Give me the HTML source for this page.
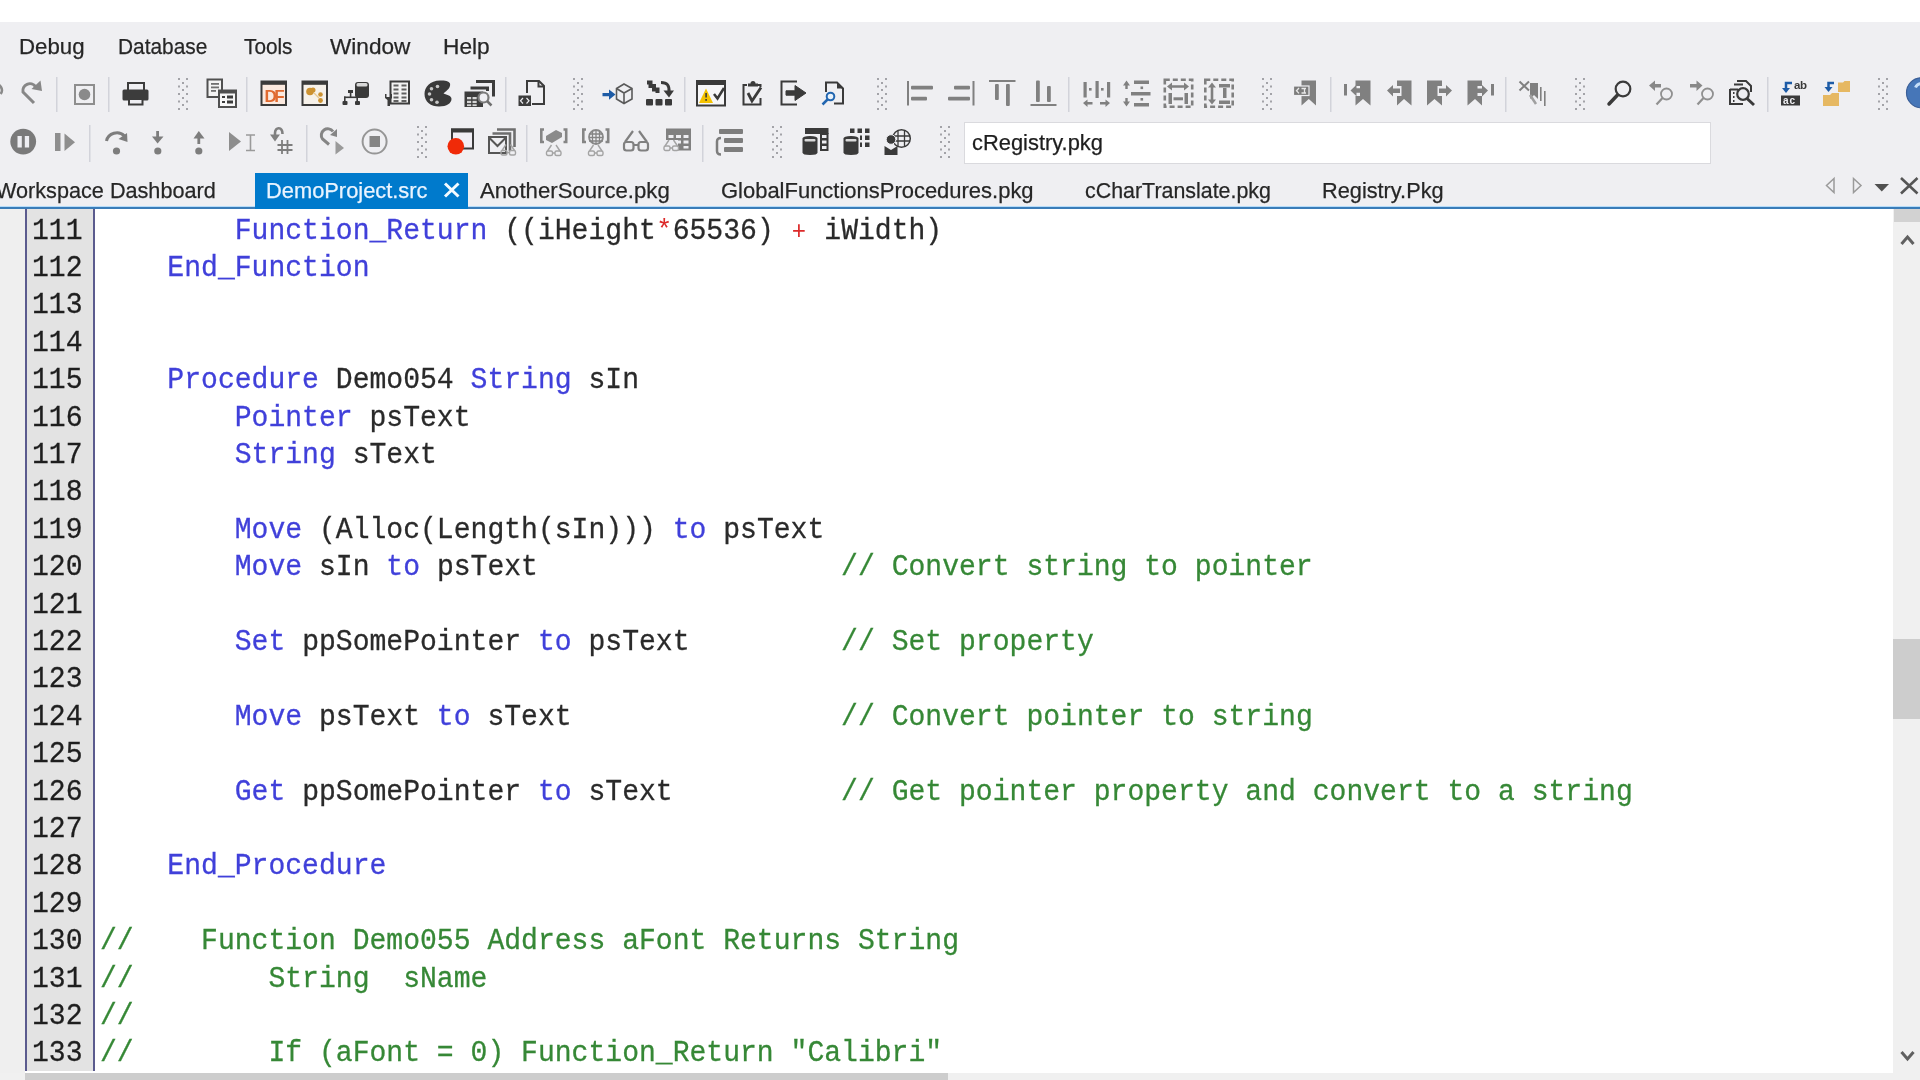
<!DOCTYPE html>
<html><head><meta charset="utf-8">
<style>
*{margin:0;padding:0;box-sizing:border-box}
html,body{width:1920px;height:1080px;overflow:hidden;background:#fff;position:relative}
body{font-family:"Liberation Sans",sans-serif}
.abs{position:absolute}
#wrap{position:absolute;left:0;top:0;width:1920px;height:1080px;overflow:hidden;background:#fff;filter:blur(0.45px)}
#chrome{position:absolute;left:0;top:22px;width:1920px;height:184px;background:#efeff2}
.lbl{position:absolute;white-space:pre;transform-origin:0 0;line-height:30px;-webkit-text-stroke:0.25px currentColor}
#blueline{position:absolute;left:0;top:207px;width:1920px;height:2px;background:#3a7cb8}
#lb{position:absolute;left:0;top:206px;width:1920px;height:1px;background:#b5dcfa}
#editor{position:absolute;left:0;top:209px;width:1920px;height:871px;background:#fff}
#leftm{position:absolute;left:0;top:209px;width:25px;height:864px;background:#efefef}
#gut{position:absolute;left:25px;top:209px;width:69.5px;height:862px;background:#e3e3e3;border-left:2.5px solid #5b5b8e;border-right:2.5px solid #5b5b8e}
.code{position:absolute;left:99.5px;top:212.5px;font-family:"Liberation Mono",monospace;font-size:30px;line-height:37.4px;white-space:pre;color:#2a2a2a;-webkit-text-stroke:0.3px currentColor;transform:scaleX(0.93556);transform-origin:0 0}
.nums{position:absolute;left:32px;top:212.5px;font-family:"Liberation Mono",monospace;font-size:30px;line-height:37.4px;white-space:pre;color:#1e1e1e;-webkit-text-stroke:0.3px currentColor;transform:scaleX(0.93556);transform-origin:0 0}
.k{color:#4040da}
.c{color:#368836}
.o{color:#dc2a2a;-webkit-text-stroke:0;display:inline-block;transform:scale(0.85);transform-origin:50% 65%}
#vs{position:absolute;left:1893px;top:209px;width:27px;height:871px;background:#f0f0f0}
#hs{position:absolute;left:0;top:1073px;width:1893px;height:7px;background:#f0f0f0}
</style></head><body><div id="wrap">
<div id="chrome">
</div>
<svg class="abs" style="left:0;top:0" width="1920" height="206" viewBox="0 0 1920 206">
<defs>
<g id="grip" fill="#a3a3a8">
<rect x="0" y="0" width="2" height="2"/><rect x="8" y="0" width="2" height="2"/>
<rect x="4" y="4" width="2" height="2"/>
<rect x="0" y="7.5" width="2" height="2"/><rect x="8" y="7.5" width="2" height="2"/>
<rect x="4" y="11" width="2" height="2"/>
<rect x="0" y="15" width="2" height="2"/><rect x="8" y="15" width="2" height="2"/>
<rect x="4" y="19" width="2" height="2"/>
<rect x="0" y="22.5" width="2" height="2"/><rect x="8" y="22.5" width="2" height="2"/>
<rect x="4" y="26" width="2" height="2"/>
<rect x="0" y="30" width="2" height="2"/><rect x="8" y="30" width="2" height="2"/>
</g>
<g id="glasses" fill="none" stroke="#a4a4a4" stroke-width="1.4">
<rect x="0" y="6" width="6" height="4.5" rx="1.5"/><rect x="8.5" y="6" width="6" height="4.5" rx="1.5"/>
<path d="M6 8 H8.5 M1 6 L5 0 M13.5 6 L9.5 0"/>
</g>
</defs>
<!-- separators row1 -->
<g fill="#d2d3da">
<rect x="56" y="77" width="1.5" height="35"/>
<rect x="108" y="77" width="1.5" height="35"/>
<rect x="246" y="77" width="1.5" height="35"/>
<rect x="505" y="77" width="1.5" height="35"/>
<rect x="684" y="77" width="1.5" height="35"/>
<rect x="1068" y="77" width="1.5" height="35"/>
<rect x="1330" y="77" width="1.5" height="35"/>
<rect x="1505" y="77" width="1.5" height="35"/>
<rect x="1767" y="77" width="1.5" height="35"/>
<!-- row2 -->
<rect x="89" y="125" width="1.5" height="37"/>
<rect x="306" y="125" width="1.5" height="37"/>
<rect x="526" y="125" width="1.5" height="37"/>
<rect x="702" y="125" width="1.5" height="37"/>
</g>
<use href="#grip" x="178" y="78"/>
<use href="#grip" x="573" y="78"/>
<use href="#grip" x="877" y="78"/>
<use href="#grip" x="1262" y="78"/>
<use href="#grip" x="1575" y="78"/>
<use href="#grip" x="1878" y="78"/>
<use href="#grip" x="417" y="126"/>
<use href="#grip" x="772" y="126"/>
<use href="#grip" x="940" y="126"/>

<!-- ROW 1 -->
<!-- partial undo at left edge -->
<path d="M-6 84.5 A6 6 0 0 1 0.5 94" fill="none" stroke="#8a8a8a" stroke-width="2.5"/>
<!-- redo -->
<path d="M34 103 L23 92 A7 7 0 0 1 35.5 86.5" fill="none" stroke="#878787" stroke-width="3"/>
<path d="M40.5 80.5 L42 91 L31.5 89 Z" fill="#878787"/>
<!-- record box -->
<rect x="75" y="85" width="19" height="19" fill="none" stroke="#8e8e8e" stroke-width="2"/>
<circle cx="84.5" cy="94.5" r="5.8" fill="#8a8a8a"/>
<!-- printer -->
<rect x="128" y="83" width="16" height="9" fill="none" stroke="#3c3c3c" stroke-width="2"/>
<rect x="122.5" y="89.5" width="26" height="11" rx="1.5" fill="#3c3c3c"/>
<rect x="129" y="99" width="13.5" height="5.5" fill="#eeeef2" stroke="#3c3c3c" stroke-width="2"/>
<!-- copy/list icon -->
<rect x="207.5" y="79.5" width="14.5" height="17.5" fill="#f4f4f4" stroke="#505050" stroke-width="2"/>
<g fill="#707070"><rect x="211" y="83" width="8" height="1.8"/><rect x="211" y="86.5" width="8" height="1.8"/><rect x="211" y="90" width="5" height="1.8"/></g>
<rect x="219" y="90.5" width="17" height="16.5" fill="#f8f8f8" stroke="#505050" stroke-width="2"/>
<rect x="219" y="90" width="17" height="3.5" fill="#505050"/>
<g fill="#3c3c3c"><rect x="222" y="96" width="3" height="2"/><rect x="227" y="95.5" width="6" height="3"/><rect x="222" y="101" width="3" height="2"/><rect x="227" y="100.5" width="6" height="3"/></g>
<!-- DF icon -->
<rect x="261.5" y="81.5" width="24.5" height="23.5" fill="#fbe9df" stroke="#3a3a3a" stroke-width="2"/>
<rect x="261" y="81" width="25.5" height="3.8" fill="#3a3a3a"/>
<text x="264.5" y="101.5" font-family="Liberation Sans" font-weight="bold" font-size="17" fill="#e06a30" letter-spacing="-2.5">DF</text>
<!-- window with yellow -->
<rect x="302.5" y="81.5" width="24.5" height="23.5" fill="#f6f1ea" stroke="#3a3a3a" stroke-width="2"/>
<rect x="302" y="81" width="25.5" height="3.8" fill="#3a3a3a"/>
<g fill="#cc9232"><circle cx="310" cy="91.5" r="3.8"/><circle cx="313" cy="90" r="2.5"/><circle cx="320.5" cy="94.5" r="2.3"/><circle cx="320.5" cy="100.5" r="2.4"/></g><path d="M314 93 L319 98" stroke="#e8c890" stroke-width="1.2"/>
<!-- hierarchy db -->
<rect x="355" y="82" width="14" height="16" rx="3" fill="#3a3a3a"/>
<rect x="356.5" y="83" width="11" height="3.5" rx="1.5" fill="#d8d8d8"/>
<g fill="#3a3a3a"><rect x="348" y="90" width="5" height="3"/><rect x="349.8" y="92" width="1.6" height="5"/><rect x="344" y="96.5" width="14" height="1.6"/><rect x="344" y="96.5" width="1.6" height="5"/><rect x="356.4" y="96.5" width="1.6" height="5"/><rect x="342.5" y="101" width="5" height="4" rx="1"/><rect x="355" y="101" width="5" height="4" rx="1"/></g>
<!-- table with tool -->
<rect x="390.5" y="81.5" width="18.5" height="22" fill="#f2f2f2" stroke="#3c3c3c" stroke-width="2"/>
<g fill="#606060"><rect x="393.5" y="84.5" width="5" height="2"/><rect x="401.5" y="84.5" width="5" height="2"/><rect x="393.5" y="88.5" width="5" height="2"/><rect x="401.5" y="88.5" width="5" height="2"/><rect x="393.5" y="92.5" width="5" height="2"/><rect x="401.5" y="92.5" width="5" height="2"/><rect x="393.5" y="96.5" width="5" height="2"/><rect x="401.5" y="96.5" width="5" height="2"/><rect x="393.5" y="100" width="5" height="2"/><rect x="401.5" y="100" width="5" height="2"/></g>
<path d="M385 94 L385 98 L387.5 100 L387.5 106 L390 106 L390 100 L392 98 L392 94 L390.5 94 L390.5 97 L386.5 97 L386.5 94 Z" fill="#3c3c3c"/>
<!-- palette -->
<path d="M440 80.5 C430 80.5 424.5 87 424.5 94 C424.5 102 431 106.5 439 106.5 C447 106.5 451.5 103 451.5 99 C451.5 95.5 447 95 443.5 93.5 C447 90.5 451 87.5 450 83.5 C449 81 445 80.5 440 80.5 Z" fill="#3a3a3a"/>
<g fill="#c8c8c8"><circle cx="437.5" cy="86.5" r="1.8"/><circle cx="431.5" cy="88.8" r="1.8"/><circle cx="429.5" cy="94" r="1.8"/><circle cx="431.5" cy="99.8" r="1.8"/><circle cx="437" cy="102.3" r="1.8"/></g>
<!-- tables search -->
<path d="M476 81.5 H493.5 V96.5" fill="none" stroke="#3c3c3c" stroke-width="3"/>
<path d="M470.5 88 H487.5 V91" fill="none" stroke="#3c3c3c" stroke-width="3"/>
<rect x="464.5" y="91.5" width="18.5" height="15.5" fill="#3c3c3c"/>
<g fill="#d6d6d6"><rect x="467" y="97" width="4.2" height="2.3"/><rect x="472.5" y="97" width="4.2" height="2.3"/><rect x="467" y="100.8" width="4.2" height="2.3"/><rect x="472.5" y="100.8" width="4.2" height="2.3"/><rect x="467" y="104.3" width="4.2" height="1.8"/><rect x="472.5" y="104.3" width="4.2" height="1.8"/></g>
<circle cx="483.5" cy="97.5" r="5" fill="#eeeef2" stroke="#7a7a7a" stroke-width="2.2"/>
<path d="M487 101 L491.5 105.5" stroke="#707070" stroke-width="2.5"/>
<!-- doc with box -->
<path d="M527 93 V81 H539 L544 86 V104 H532" fill="none" stroke="#3c3c3c" stroke-width="2"/>
<path d="M538.5 81 V86.5 H544" fill="none" stroke="#3c3c3c" stroke-width="2"/>
<rect x="518.5" y="95.5" width="12.5" height="10.5" fill="#3c3c3c"/>
<path d="M523 98 L520.5 100.8 L523 103.5 M526.5 98 L529 100.8 L526.5 103.5" fill="none" stroke="#eeeef2" stroke-width="1.2"/>
<!-- blue arrow cube -->
<path d="M602.5 93 H609 V89.5 L615.5 94.6 L609 99.7 V96.3 H602.5 Z" fill="#1d5ba6"/>
<path d="M624 84 L632 88.5 V99 L624 103.5 L616.5 99 V88.5 Z M616.5 88.5 L624 93 L632 88.5 M624 93 V103.5" fill="none" stroke="#5a5a5a" stroke-width="1.6"/>
<!-- stairs arrows + blocks -->
<path d="M647 82.5 L650.5 82.5 L650.5 86 L654 86 L654 89.5 L657.5 89.5 L657.5 93" fill="none" stroke="#3a3a3a" stroke-width="4"/>
<path d="M661 82.5 C667 82.5 669.5 85 669 92" fill="none" stroke="#3a3a3a" stroke-width="3"/>
<path d="M663.5 90.5 L669 97.5 L674 90.5 Z" fill="#3a3a3a"/>
<g fill="#3a3a3a"><rect x="646" y="99" width="7" height="6.5" rx="1"/><rect x="655.5" y="99" width="7" height="6.5" rx="1"/><rect x="665" y="99" width="7" height="6.5" rx="1"/></g>
<!-- window warning check -->
<rect x="697" y="81" width="28" height="24.5" fill="#f6f6f8" stroke="#3a3a3a" stroke-width="2"/>
<rect x="696" y="80.5" width="30" height="4.5" fill="#3a3a3a"/>
<path d="M706 88.5 L713 103 H699 Z" fill="#f4c200"/>
<g fill="#3a3a3a"><rect x="705.3" y="93" width="1.6" height="4.5"/><rect x="705.3" y="99" width="1.6" height="1.8"/></g>
<path d="M714 94 L717.5 98.5 L724 88" fill="none" stroke="#3a3a3a" stroke-width="2.5"/>
<!-- clipboard check -->
<path d="M747 85 H743.5 V104.5 H760.5 V98" fill="none" stroke="#3a3a3a" stroke-width="2"/>
<path d="M757 85 H760.5 V87" fill="none" stroke="#3a3a3a" stroke-width="2"/>
<path d="M748 86.5 V83.5 H750.5 A2.5 2.5 0 0 1 755.5 83.5 H758 V86.5 Z" fill="#3a3a3a"/>
<path d="M748 93 L752 101 L761 87.5" fill="none" stroke="#3a3a3a" stroke-width="2.8"/>
<!-- export arrow -->
<path d="M797 81.5 H781.5 V104.5 H797" fill="none" stroke="#3a3a3a" stroke-width="2"/>
<path d="M786 90.8 H795 V85.5 L806 93 L795 100.5 V95.2 H786 Z" fill="#3a3a3a" stroke="#3a3a3a" stroke-width="1" stroke-linejoin="round"/>
<!-- doc search -->
<path d="M826 92 V82.5 H837 L843 88.5 V103.5 H834" fill="none" stroke="#3a3a3a" stroke-width="2"/>
<path d="M837 82.5 V88.5 H843 Z" fill="#3a3a3a"/>
<circle cx="830.5" cy="96.5" r="3.8" fill="#e8f2fb" stroke="#2266b0" stroke-width="2"/>
<path d="M827.5 99.5 L822.5 104.5" stroke="#2266b0" stroke-width="2.5"/>
<!-- align left -->
<g fill="#808080">
<rect x="907" y="81" width="2" height="24.5"/><rect x="911" y="85.7" width="22" height="3.8" rx="1"/><rect x="911" y="96.8" width="16" height="3.8" rx="1"/>
<rect x="972.5" y="81" width="2" height="24.5"/><rect x="954" y="85.7" width="16" height="3.8" rx="1"/><rect x="948" y="96.8" width="22" height="3.8" rx="1"/>
<rect x="989" y="80" width="26.5" height="2"/><rect x="995" y="84" width="3.8" height="16" rx="1"/><rect x="1006" y="84" width="3.8" height="22" rx="1"/>
<rect x="1030.5" y="104" width="26" height="2"/><rect x="1036" y="80.5" width="3.8" height="21.5" rx="1"/><rect x="1047" y="86" width="3.8" height="16" rx="1"/>
<!-- space horiz -->
<rect x="1083.5" y="82" width="3.2" height="15.5"/><rect x="1095.5" y="81" width="3.2" height="17"/><rect x="1107" y="82" width="3.2" height="15.5"/>
<rect x="1089" y="88" width="2.6" height="2.6"/><rect x="1101" y="88" width="2.6" height="2.6"/>
<path d="M1083 103 L1087.5 99.5 V102 H1092.5 V104.5 H1087.5 V107 Z"/><path d="M1110 103 L1105.5 99.5 V102 H1100 V104.5 H1105.5 V107 Z"/>
<!-- space vert -->
<rect x="1134" y="80.5" width="15" height="3.5"/><rect x="1131" y="92" width="19.5" height="3.5"/><rect x="1134" y="103" width="15" height="3.5"/>
<rect x="1140.5" y="86.5" width="2.6" height="2.6"/><rect x="1140.5" y="98" width="2.6" height="2.6"/>
<path d="M1126.5 80.5 L1123 85.5 H1125.3 V89 H1127.7 V85.5 H1130 Z"/><path d="M1126.5 106.5 L1123 101.5 H1125.3 V98 H1127.7 V101.5 H1130 Z"/>
</g>
<!-- size width -->
<rect x="1164.8" y="79.8" width="27.4" height="27" fill="none" stroke="#808080" stroke-width="2.6" stroke-dasharray="5 3"/>
<g fill="#808080">
<path d="M1167 86.5 L1172 82.5 V85.2 H1184 V82.5 L1189 86.5 L1184 90.5 V87.8 H1172 V90.5 Z"/>
<rect x="1168.5" y="93" width="3.5" height="11"/><rect x="1184.5" y="93" width="3.5" height="11"/><rect x="1173.5" y="97.3" width="9.5" height="3"/>
</g>
<!-- size height -->
<rect x="1205.3" y="79.8" width="27.4" height="27" fill="none" stroke="#808080" stroke-width="2.6" stroke-dasharray="5 3"/>
<g fill="#808080">
<path d="M1212 82.5 L1216 87.5 H1213.3 V99.5 H1216 L1212 104.5 L1208 99.5 H1210.7 V87.5 H1208 Z"/>
<rect x="1219" y="84" width="11" height="3.5"/><rect x="1219" y="100.5" width="11" height="3.5"/><rect x="1223" y="88" width="3.5" height="10"/>
</g>
<!-- bookmarks -->
<g fill="#808080">
<path d="M1301.5 80.5 H1316 V105.5 L1308.8 99 L1301.5 105.5 Z"/>
<rect x="1293.5" y="86" width="15.5" height="9.5" fill="#7c7c7c" stroke="#eeeef2" stroke-width="1.2"/>
<path d="M1299 88 L1296.5 90.7 L1299 93.4 M1301.5 88.5 H1306 M1301.5 93 H1306 M1304.5 88.5 V93" fill="none" stroke="#e8e8e8" stroke-width="1.3"/>
<path d="M1344 84 H1347 V95.5 H1344 Z M1350.5 90.5 L1356.5 84.8 V88.3 H1361 V92.7 H1356.5 V96.2 Z"/>
<path d="M1355.5 80.5 H1370.5 V105.5 L1363 99 L1355.5 105.5 V96 H1360 V86 H1355.5 Z"/>
<path d="M1397 80.5 H1411.5 V105.5 L1404 99 L1397 105.5 V96 H1401.5 V86 H1397 Z"/>
<path d="M1387 90.5 L1393 85 V88.5 H1400 V93 H1393 V96.5 Z"/>
<path d="M1427 80.5 H1442 V86 H1437.5 V96 H1442 V105.5 L1434.5 99 L1427 105.5 Z"/>
<path d="M1452 90.5 L1446 85 V88.5 H1439 V93 H1446 V96.5 Z"/>
<path d="M1467.5 80.5 H1482 V86 H1477.5 V96 H1482 V105.5 L1475 99 L1467.5 105.5 Z"/>
<path d="M1488 90.5 L1482 85 V88.5 H1475 V93 H1482 V96.5 Z"/>
<rect x="1491" y="84" width="3" height="11.5"/>
<!-- clear bookmarks -->
<path d="M1519.5 81.5 L1529 90.5 M1529 81.5 L1519.5 90.5" stroke="#808080" stroke-width="2"/>
<path d="M1530 83 H1538 V99 L1534 95 L1530 99 Z" fill="#808080"/>
<path d="M1530 95 L1536 104" stroke="#a0a0a0" stroke-width="2.5"/>
<rect x="1540" y="87" width="1.6" height="14"/><rect x="1544" y="91" width="1.6" height="15"/>
</g>
<!-- search -->
<circle cx="1623" cy="89" r="7.3" fill="none" stroke="#3a3a3a" stroke-width="2.2"/>
<path d="M1617.5 95 L1609 104" stroke="#3a3a3a" stroke-width="3.5" stroke-linecap="round"/>
<!-- find prev -->
<path d="M1649 85.5 L1655 80.5 V84 H1661 V87.5 H1655 V91 Z" fill="#888"/>
<circle cx="1666.5" cy="94" r="5.5" fill="none" stroke="#909090" stroke-width="1.8"/>
<path d="M1662.5 98 L1656.5 104.5" stroke="#909090" stroke-width="2.2"/>
<!-- find next -->
<path d="M1702.5 85.5 L1696.5 80.5 V84 H1690 V87.5 H1696.5 V91 Z" fill="#888"/>
<circle cx="1707.5" cy="94" r="5.5" fill="none" stroke="#909090" stroke-width="1.8"/>
<path d="M1703.5 98 L1697.5 104.5" stroke="#909090" stroke-width="2.2"/>
<!-- find in files -->
<path d="M1737 81 H1746 L1751 86 V92 M1734 84.5 H1743" fill="none" stroke="#3a3a3a" stroke-width="2"/>
<path d="M1730 89.5 H1738 M1730 89 V104 H1743" fill="none" stroke="#3a3a3a" stroke-width="2"/>
<g fill="#3a3a3a"><rect x="1733" y="92" width="1.5" height="2"/><rect x="1733" y="96" width="1.5" height="2"/><rect x="1733" y="100" width="1.5" height="2"/></g>
<circle cx="1743" cy="94" r="5.8" fill="#eeeef2" stroke="#3a3a3a" stroke-width="2.2"/>
<path d="M1747 98.5 L1754 105" stroke="#3a3a3a" stroke-width="3"/>
<!-- replace -->
<path d="M1792 83 H1786 V90" fill="none" stroke="#1d5ba6" stroke-width="2.5"/>
<path d="M1782 88 L1786 93 L1790 88 Z" fill="#1d5ba6"/>
<text x="1794" y="89" font-family="Liberation Sans" font-weight="bold" font-size="11.5" fill="#3a3a3a" letter-spacing="-0.5">ab</text>
<rect x="1781" y="95.5" width="19" height="10" fill="#3a3a3a"/>
<text x="1783" y="104" font-family="Liberation Sans" font-weight="bold" font-size="10" fill="#eeeef2" letter-spacing="1">ac</text>
<!-- folder replace -->
<path d="M1834 83 H1828.5 V89" fill="none" stroke="#1d5ba6" stroke-width="2.5"/>
<path d="M1824.5 87 L1828.5 92 L1832.5 87 Z" fill="#1d5ba6"/>
<path d="M1838 82.5 H1843 L1844.5 81 H1850 V92 H1838 Z" fill="#e6b862"/>
<path d="M1823 95 H1830 L1832 93 H1839 V106 H1823 Z" fill="#e6b862"/>
<!-- help -->
<circle cx="1921.5" cy="92.8" r="15" fill="#4676b8" stroke="#3b5f98" stroke-width="1.2"/>
<path d="M1915.5 87.5 A6.5 6.5 0 0 1 1926 85.5" fill="none" stroke="#c6def8" stroke-width="3"/>

<!-- ROW 2 -->
<circle cx="23.2" cy="141.6" r="12.9" fill="#7a7a7a"/>
<rect x="17.5" y="136" width="4.3" height="11.5" fill="#eeeef2"/><rect x="24.8" y="136" width="4.3" height="11.5" fill="#eeeef2"/>
<rect x="55" y="133" width="5.5" height="18" fill="#8e8e8e"/>
<path d="M64.5 133.5 L75 142.2 L64.5 151 Z" fill="#8e8e8e"/>
<!-- step over -->
<path d="M106.5 141 A10.5 10 0 0 1 124.5 136" fill="none" stroke="#7d7d7d" stroke-width="3"/>
<path d="M118.5 139 L127.5 142 L127 133 Z" fill="#7d7d7d"/>
<circle cx="116.5" cy="151" r="3.6" fill="#7d7d7d"/>
<!-- step into -->
<rect x="156.2" y="131" width="2.8" height="9" fill="#7d7d7d"/>
<path d="M152 136.5 L157.6 143.5 L163.5 136.5 Z" fill="#7d7d7d"/>
<circle cx="157.8" cy="151" r="3.6" fill="#7d7d7d"/>
<!-- step out -->
<rect x="197.4" y="135" width="2.8" height="9" fill="#7d7d7d"/>
<path d="M193.5 138.5 L198.8 131 L204.5 138.5 Z" fill="#7d7d7d"/>
<circle cx="198.8" cy="151" r="3.6" fill="#7d7d7d"/>
<!-- run to cursor -->
<path d="M229 132 L241 141.5 L229 151 Z" fill="#8e8e8e"/>
<path d="M246 135 H255 M250.5 135 V150.5 M246 150.5 H255" fill="none" stroke="#9a9a9a" stroke-width="1.6"/>
<!-- set next # -->
<path d="M282.5 134 C282.5 126.5 275 126.5 275 133 V136" fill="none" stroke="#808080" stroke-width="2.6"/>
<path d="M270 134.5 L280 134.5 L275 141.5 Z" fill="#808080"/>
<path d="M282 140 V154 M287.5 140 V154 M277.5 145 H292.5 M277.5 150 H292.5" fill="none" stroke="#7d7d7d" stroke-width="1.8"/>
<!-- step back -->
<path d="M329 144.5 L322.5 139 A6 6 0 0 1 333 131.5" fill="none" stroke="#858585" stroke-width="3"/>
<path d="M330 135 L337 137 L337 129 Z" fill="#858585"/>
<path d="M335.5 141 L344 148 L335.5 154.5 Z" fill="#9a9a9a"/>
<!-- stop -->
<circle cx="374.6" cy="141.6" r="12" fill="none" stroke="#969696" stroke-width="2"/>
<rect x="369.5" y="136" width="10.5" height="11" fill="#858585"/>
<!-- breakpoint window -->
<rect x="452" y="129.5" width="21" height="19" fill="#f0eef4" stroke="#3a3a3a" stroke-width="2"/>
<rect x="451" y="128.5" width="23" height="4" fill="#3a3a3a"/>
<circle cx="455.8" cy="146.3" r="8.3" fill="#f02a08"/>
<!-- mail stack -->
<path d="M497 129.5 H514.5 V147 M492.5 133.5 H510 V151" fill="none" stroke="#6e6e6e" stroke-width="2.6"/>
<rect x="489" y="137" width="17" height="16" fill="#eeeef2" stroke="#555" stroke-width="2"/>
<path d="M489 137.5 L497.5 146 L506 137.5" fill="none" stroke="#555" stroke-width="2"/>
<use href="#glasses" x="501" y="144.5"/>
<!-- bracket object -->
<path d="M544 129.5 H541.3 V142 H544 M563.5 129.5 H566.2 V142 H563.5" fill="none" stroke="#858585" stroke-width="2.6"/>
<path d="M546 136 L556 130 L562 133 L562 137 L552 143 L546 140 Z" fill="#8a8a8a"/>
<use href="#glasses" x="546.5" y="145"/>
<!-- bracket globe -->
<path d="M586 129.5 H583.3 V142 H586 M605.5 129.5 H608.2 V142 H605.5" fill="none" stroke="#858585" stroke-width="2.6"/>
<circle cx="596" cy="137" r="7" fill="none" stroke="#8a8a8a" stroke-width="1.8"/>
<path d="M589 134 H603 M589 137.5 H603 M589 141 H603 M592.5 130.5 V143.5 M596 130 V144 M599.5 130.5 V143.5" stroke="#858585" stroke-width="1.3"/>
<use href="#glasses" x="588.5" y="145"/>
<!-- glasses big -->
<g fill="none" stroke="#808080" stroke-width="2.2">
<rect x="624" y="142" width="9.5" height="8.5" rx="2.5"/><rect x="638.5" y="142" width="9.5" height="8.5" rx="2.5"/>
<path d="M633.5 145 H638.5 M625 142 L633 131 M647 142 L639 131"/>
</g>
<!-- table glasses -->
<rect x="666" y="128.5" width="25" height="22" fill="#808080"/>
<g fill="#eeeef2"><rect x="668.5" y="135" width="5" height="3"/><rect x="676" y="135" width="5" height="3"/><rect x="683.5" y="135" width="5" height="3"/><rect x="676" y="140.5" width="5" height="3"/><rect x="683.5" y="140.5" width="5" height="3"/><rect x="683.5" y="146" width="5" height="2.5"/><rect x="664" y="140" width="14" height="16"/></g>
<use href="#glasses" x="664" y="140"/>
<!-- list -->
<g fill="#7d7d7d"><rect x="719" y="129" width="24" height="5" rx="1"/><rect x="724" y="138" width="19" height="5" rx="1"/><rect x="724" y="147" width="19" height="5" rx="1"/></g>
<path d="M721 138 Q717 138 717 141.5 V151 Q717 154.5 721 154.5" fill="none" stroke="#7d7d7d" stroke-width="2.5"/>
<!-- db table -->
<rect x="805" y="128" width="23.5" height="6" fill="#3a3a3a"/>
<rect x="820" y="133" width="8.5" height="18" fill="#3a3a3a"/>
<g fill="#eeeef2"><rect x="822" y="135" width="4.5" height="3"/><rect x="822" y="140.5" width="4.5" height="3"/><rect x="822" y="146" width="4.5" height="3"/></g>
<path d="M802.5 138.5 Q802.5 136 810 136 Q817.5 136 817.5 138.5 V152.5 Q817.5 155 810 155 Q802.5 155 802.5 152.5 Z" fill="#3a3a3a"/>
<rect x="804.5" y="139" width="11" height="2.5" rx="1" fill="#d9d9d9"/>
<!-- db grid -->
<g fill="#3a3a3a"><rect x="850" y="128.5" width="4.5" height="4.5"/><rect x="857.5" y="128.5" width="4.5" height="4.5"/><rect x="865" y="128.5" width="4.5" height="4.5"/><rect x="860" y="135.5" width="2" height="4.5"/><rect x="865" y="135.5" width="4.5" height="4.5"/><rect x="860" y="142.5" width="2" height="4.5"/><rect x="865" y="142.5" width="4.5" height="4.5"/></g>
<path d="M843.5 138.5 Q843.5 136 851 136 Q858.5 136 858.5 138.5 V152.5 Q858.5 155 851 155 Q843.5 155 843.5 152.5 Z" fill="#3a3a3a"/>
<rect x="845.5" y="139" width="11" height="2.5" rx="1" fill="#d9d9d9"/>
<!-- person globe -->
<circle cx="901.5" cy="138.5" r="8.8" fill="none" stroke="#3a3a3a" stroke-width="1.5"/>
<path d="M893 136 H910 M893 141 H910 M898 130 V147 M904.5 130 V147" stroke="#3a3a3a" stroke-width="1.3"/>
<circle cx="891" cy="139.5" r="4.8" fill="#3a3a3a" stroke="#eeeef2" stroke-width="1"/>
<path d="M884.5 146 L891 150 L897.5 146 V155 H884.5 Z" fill="#3a3a3a"/>
</svg>


<div id="lb"></div>
<div id="blueline"></div>
<div class="abs" style="left:255px;top:173px;width:213px;height:36px;background:#007acc"></div>
<div id="editor"></div>
<div id="leftm"></div>
<div id="gut"></div>
<div class="nums">111
112
113
114
115
116
117
118
119
120
121
122
123
124
125
126
127
128
129
130
131
132
133</div>
<div class="code"><span>        </span><span class="k">Function_Return</span> ((iHeight<span class="o" style="transform:scale(0.95);transform-origin:50% 20%">*</span>65536) <span class="o">+</span> iWidth)
    <span class="k">End_Function</span>


    <span class="k">Procedure</span> Demo054 <span class="k">String</span> sIn
        <span class="k">Pointer</span> psText
        <span class="k">String</span> sText

        <span class="k">Move</span> (Alloc(Length(sIn))) <span class="k">to</span> psText
        <span class="k">Move</span> sIn <span class="k">to</span> psText                  <span class="c">// Convert string to pointer</span>

        <span class="k">Set</span> ppSomePointer <span class="k">to</span> psText         <span class="c">// Set property</span>

        <span class="k">Move</span> psText <span class="k">to</span> sText                <span class="c">// Convert pointer to string</span>

        <span class="k">Get</span> ppSomePointer <span class="k">to</span> sText          <span class="c">// Get pointer property and convert to a string</span>

    <span class="k">End_Procedure</span>

<span class="c">//    Function Demo055 Address aFont Returns String</span>
<span class="c">//        String  sName</span>
<span class="c">//</span>
<span class="c">//        If (aFont = 0) Function_Return "Calibri"</span></div>
<div id="vs"></div>
<div id="hs"></div>
<div class="abs" style="left:25px;top:1073px;width:923px;height:7px;background:#cdcdcd"></div>
<div class="abs" style="left:1893px;top:639px;width:27px;height:80px;background:#cdcdcd"></div>
<div class="abs" style="left:1894px;top:209px;width:26px;height:13px;background:#d2d2d2"></div>
<div class="abs" style="left:963.5px;top:121.5px;width:747px;height:42px;background:#fff;border:1px solid #dadade"></div>
<svg class="abs" style="left:0;top:0" width="1920" height="1080" viewBox="0 0 1920 1080">
<path d="M445 183.5 L458.5 196.5 M458.5 183.5 L445 196.5" stroke="#f4fbff" stroke-width="3"/>
<path d="M1834 178.5 L1826.5 185.5 L1834 192.5 Z" fill="none" stroke="#9a9a9a" stroke-width="1.5"/>
<path d="M1853.5 178.5 L1861 185.5 L1853.5 192.5 Z" fill="none" stroke="#9a9a9a" stroke-width="1.5"/>
<path d="M1874.5 184 H1889 L1881.8 191.5 Z" fill="#505050"/>
<path d="M1901 178 L1917.5 193.5 M1917.5 178 L1901 193.5" stroke="#555" stroke-width="2.6"/>
<path d="M1901.5 244 L1907.5 237 L1913.5 244" fill="none" stroke="#606060" stroke-width="3"/>
<path d="M1901.5 1052 L1907.5 1059 L1913.5 1052" fill="none" stroke="#606060" stroke-width="3"/>
</svg>
<!--LABELS-->
<div class="lbl" id="l_Debug" style="left:19.38px;top:31.90px;font-size:22.5px;color:#262626;transform:scaleX(0.9889)">Debug</div>
<div class="lbl" id="l_Database" style="left:118.38px;top:31.90px;font-size:22.5px;color:#262626;transform:scaleX(0.9278)">Database</div>
<div class="lbl" id="l_Tools" style="left:243.50px;top:31.90px;font-size:22.5px;color:#262626;transform:scaleX(0.9232)">Tools</div>
<div class="lbl" id="l_Window" style="left:329.81px;top:31.90px;font-size:22.5px;color:#262626;transform:scaleX(1.0049)">Window</div>
<div class="lbl" id="l_Help" style="left:442.98px;top:31.90px;font-size:22.5px;color:#262626;transform:scaleX(1.0088)">Help</div>
<div class="lbl" id="l_WD" style="left:-4.00px;top:175.90px;font-size:22.5px;color:#262626;transform:scaleX(0.9620)">Workspace Dashboard</div>
<div class="lbl" id="l_Demo" style="left:266.48px;top:175.90px;font-size:22.5px;color:#eaf4ff;transform:scaleX(0.9712)">DemoProject.src</div>
<div class="lbl" id="l_Another" style="left:480.21px;top:175.90px;font-size:22.5px;color:#262626;transform:scaleX(0.9852)">AnotherSource.pkg</div>
<div class="lbl" id="l_Global" style="left:721.00px;top:175.90px;font-size:22.5px;color:#262626;transform:scaleX(0.9763)">GlobalFunctionsProcedures.pkg</div>
<div class="lbl" id="l_cChar" style="left:1085.20px;top:175.90px;font-size:22.5px;color:#262626;transform:scaleX(0.9513)">cCharTranslate.pkg</div>
<div class="lbl" id="l_Reg" style="left:1321.98px;top:175.90px;font-size:22.5px;color:#262626;transform:scaleX(0.9661)">Registry.Pkg</div>
<div class="lbl" id="l_combo" style="left:972.10px;top:127.80px;font-size:22.5px;color:#1e1e1e;transform:scaleX(0.9730)">cRegistry.pkg</div>
<!--/LABELS-->
</div></body></html>
